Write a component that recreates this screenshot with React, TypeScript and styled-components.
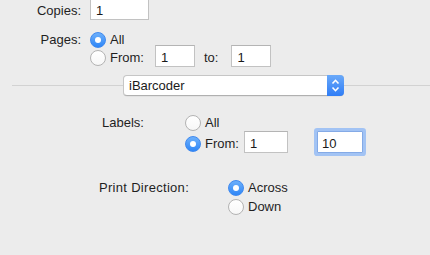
import React from "react";
import styled, { createGlobalStyle } from "styled-components";

const GlobalStyle = createGlobalStyle`
  html, body {
    margin: 0;
    padding: 0;
    background: #ececec;
  }
  body {
    font-family: "Liberation Sans", Arial, sans-serif;
    font-size: 13px;
    color: #1f1f1f;
    overflow: hidden;
  }
`;

const Page = styled.div`
  width: 430px;
  height: 255px;
  overflow: hidden;
  display: flex;
  flex-direction: column;
`;

const TopGrid = styled.div`
  display: grid;
  grid-template-columns: 81px auto;
  column-gap: 9px;
  row-gap: 12px;
  justify-content: start;
  margin-top: -2px;
`;

const RightLabel = styled.div<{ $mt?: number }>`
  text-align: right;
  line-height: 16px;
  margin-top: ${(p) => p.$mt ?? 0}px;
  white-space: nowrap;
`;

const Field = styled.div<{ $w: number; $ml?: number; $focused?: boolean }>`
  box-sizing: border-box;
  width: ${(p) => p.$w}px;
  height: 22px;
  flex: none;
  margin-left: ${(p) => p.$ml ?? 0}px;
  background: #fff;
  border: 1px solid ${(p) => (p.$focused ? "#84aae6" : "#c2c2c2")};
  border-top-color: ${(p) => (p.$focused ? "#84aae6" : "#b4b4b4")};
  padding: 4px 0 0 ${(p) => (p.$focused ? 4 : 5)}px;
  line-height: 16px;
  color: #1a1a1a;
  ${(p) =>
    p.$focused &&
    `
    border-radius: 1px;
    box-shadow: 0 0 0 3px #a2c3f4;
  `}
`;

const Group = styled.div`
  display: flex;
  flex-direction: column;
`;

const OptionRow = styled.div<{ $mt?: number; $tall?: boolean }>`
  display: flex;
  align-items: flex-start;
  gap: 4px;
  height: ${(p) => (p.$tall ? 22 : 16)}px;
  margin-top: ${(p) => p.$mt ?? 0}px;
`;

const OptionText = styled.span<{ $mt?: number; $ml?: number }>`
  line-height: 16px;
  margin-top: ${(p) => p.$mt ?? 0}px;
  margin-left: ${(p) => p.$ml ?? 0}px;
  white-space: nowrap;
`;

const Radio = styled.span<{ $checked?: boolean; $mt?: number }>`
  box-sizing: border-box;
  width: 16px;
  height: 16px;
  flex: none;
  border-radius: 50%;
  margin-top: ${(p) => p.$mt ?? 0}px;
  display: flex;
  align-items: center;
  justify-content: center;
  background: ${(p) =>
    p.$checked
      ? "linear-gradient(#6db0fb, #2e86f7)"
      : "linear-gradient(#ffffff, #f7f7f7)"};
  border: 1px solid ${(p) => (p.$checked ? "#3f89ef" : "#b3b3b3")};
  &::after {
    content: "";
    display: ${(p) => (p.$checked ? "block" : "none")};
    width: 6px;
    height: 6px;
    border-radius: 50%;
    background: #fff;
  }
`;

const SeparatorRow = styled.div`
  display: flex;
  align-items: center;
  margin-top: 8px;
`;

const Rule = styled.div<{ $w?: number; $ml?: number }>`
  height: 1px;
  background: #d2d2d2;
  margin-left: ${(p) => p.$ml ?? 0}px;
  ${(p) => (p.$w ? `width: ${p.$w}px;` : "flex: 1;")}
`;

const Popup = styled.div`
  box-sizing: border-box;
  width: 221px;
  height: 21px;
  display: flex;
  background: #fff;
  border: 1px solid #c6c6c6;
  border-bottom-color: #b0b0b0;
  border-radius: 4px;
  box-shadow: 0 0.5px 0.5px rgba(0, 0, 0, 0.08);
`;

const PopupText = styled.span`
  flex: 1;
  padding-left: 5px;
  line-height: 19px;
  color: #1a1a1a;
`;

const Stepper = styled.span`
  width: 17px;
  margin: -1px -1px -1px 0;
  border-radius: 0 4px 4px 0;
  background: linear-gradient(#6aa9f9, #2f7df6);
  display: flex;
  align-items: center;
  justify-content: center;
`;

const Section = styled.div<{ $mt: number; $pl: number }>`
  display: flex;
  align-items: flex-start;
  margin-top: ${(p) => p.$mt}px;
  padding-left: ${(p) => p.$pl}px;
`;

const SectionLabel = styled.div<{ $w: number; $tracking?: number }>`
  width: ${(p) => p.$w}px;
  line-height: 16px;
  flex: none;
  white-space: nowrap;
  letter-spacing: ${(p) => p.$tracking ?? 0}px;
`;

const Chevrons = () => (
  <svg width="17" height="21" viewBox="0 0 17 21">
    <path
      d="M5.5 8.5 L8.5 5.3 L11.5 8.5 M5.5 12.5 L8.5 15.7 L11.5 12.5"
      fill="none"
      stroke="#fff"
      strokeWidth="1.6"
    />
  </svg>
);

export default function App() {
  return (
    <>
      <GlobalStyle />
      <Page>
        <TopGrid>
          <RightLabel $mt={5}>Copies:</RightLabel>
          <Field $w={59}>1</Field>

          <RightLabel>Pages:</RightLabel>
          <Group>
            <OptionRow>
              <Radio $checked />
              <OptionText>All</OptionText>
            </OptionRow>
            <OptionRow $tall $mt={-3}>
              <Radio $mt={5} />
              <OptionText $mt={5}>From:</OptionText>
              <Field $w={40} $ml={7}>
                1
              </Field>
              <OptionText $mt={5} $ml={5}>
                to:
              </OptionText>
              <Field $w={40} $ml={9}>
                1
              </Field>
            </OptionRow>
          </Group>
        </TopGrid>

        <SeparatorRow>
          <Rule $ml={12} $w={111} />
          <Popup>
            <PopupText>iBarcoder</PopupText>
            <Stepper>
              <Chevrons />
            </Stepper>
          </Popup>
          <Rule />
        </SeparatorRow>

        <Section $mt={19} $pl={102}>
          <SectionLabel $w={83}>Labels:</SectionLabel>
          <Group>
            <OptionRow>
              <Radio />
              <OptionText>All</OptionText>
            </OptionRow>
            <OptionRow $tall>
              <Radio $checked $mt={5} />
              <OptionText $mt={5}>From:</OptionText>
              <Field $w={44} $ml={1}>
                1
              </Field>
              <Field $w={46} $ml={25} $focused>
                10
              </Field>
            </OptionRow>
          </Group>
        </Section>

        <Section $mt={27} $pl={99}>
          <SectionLabel $w={129} $tracking={0.3}>
            Print Direction:
          </SectionLabel>
          <Group>
            <OptionRow>
              <Radio $checked />
              <OptionText>Across</OptionText>
            </OptionRow>
            <OptionRow $mt={3}>
              <Radio />
              <OptionText>Down</OptionText>
            </OptionRow>
          </Group>
        </Section>
      </Page>
    </>
  );
}
